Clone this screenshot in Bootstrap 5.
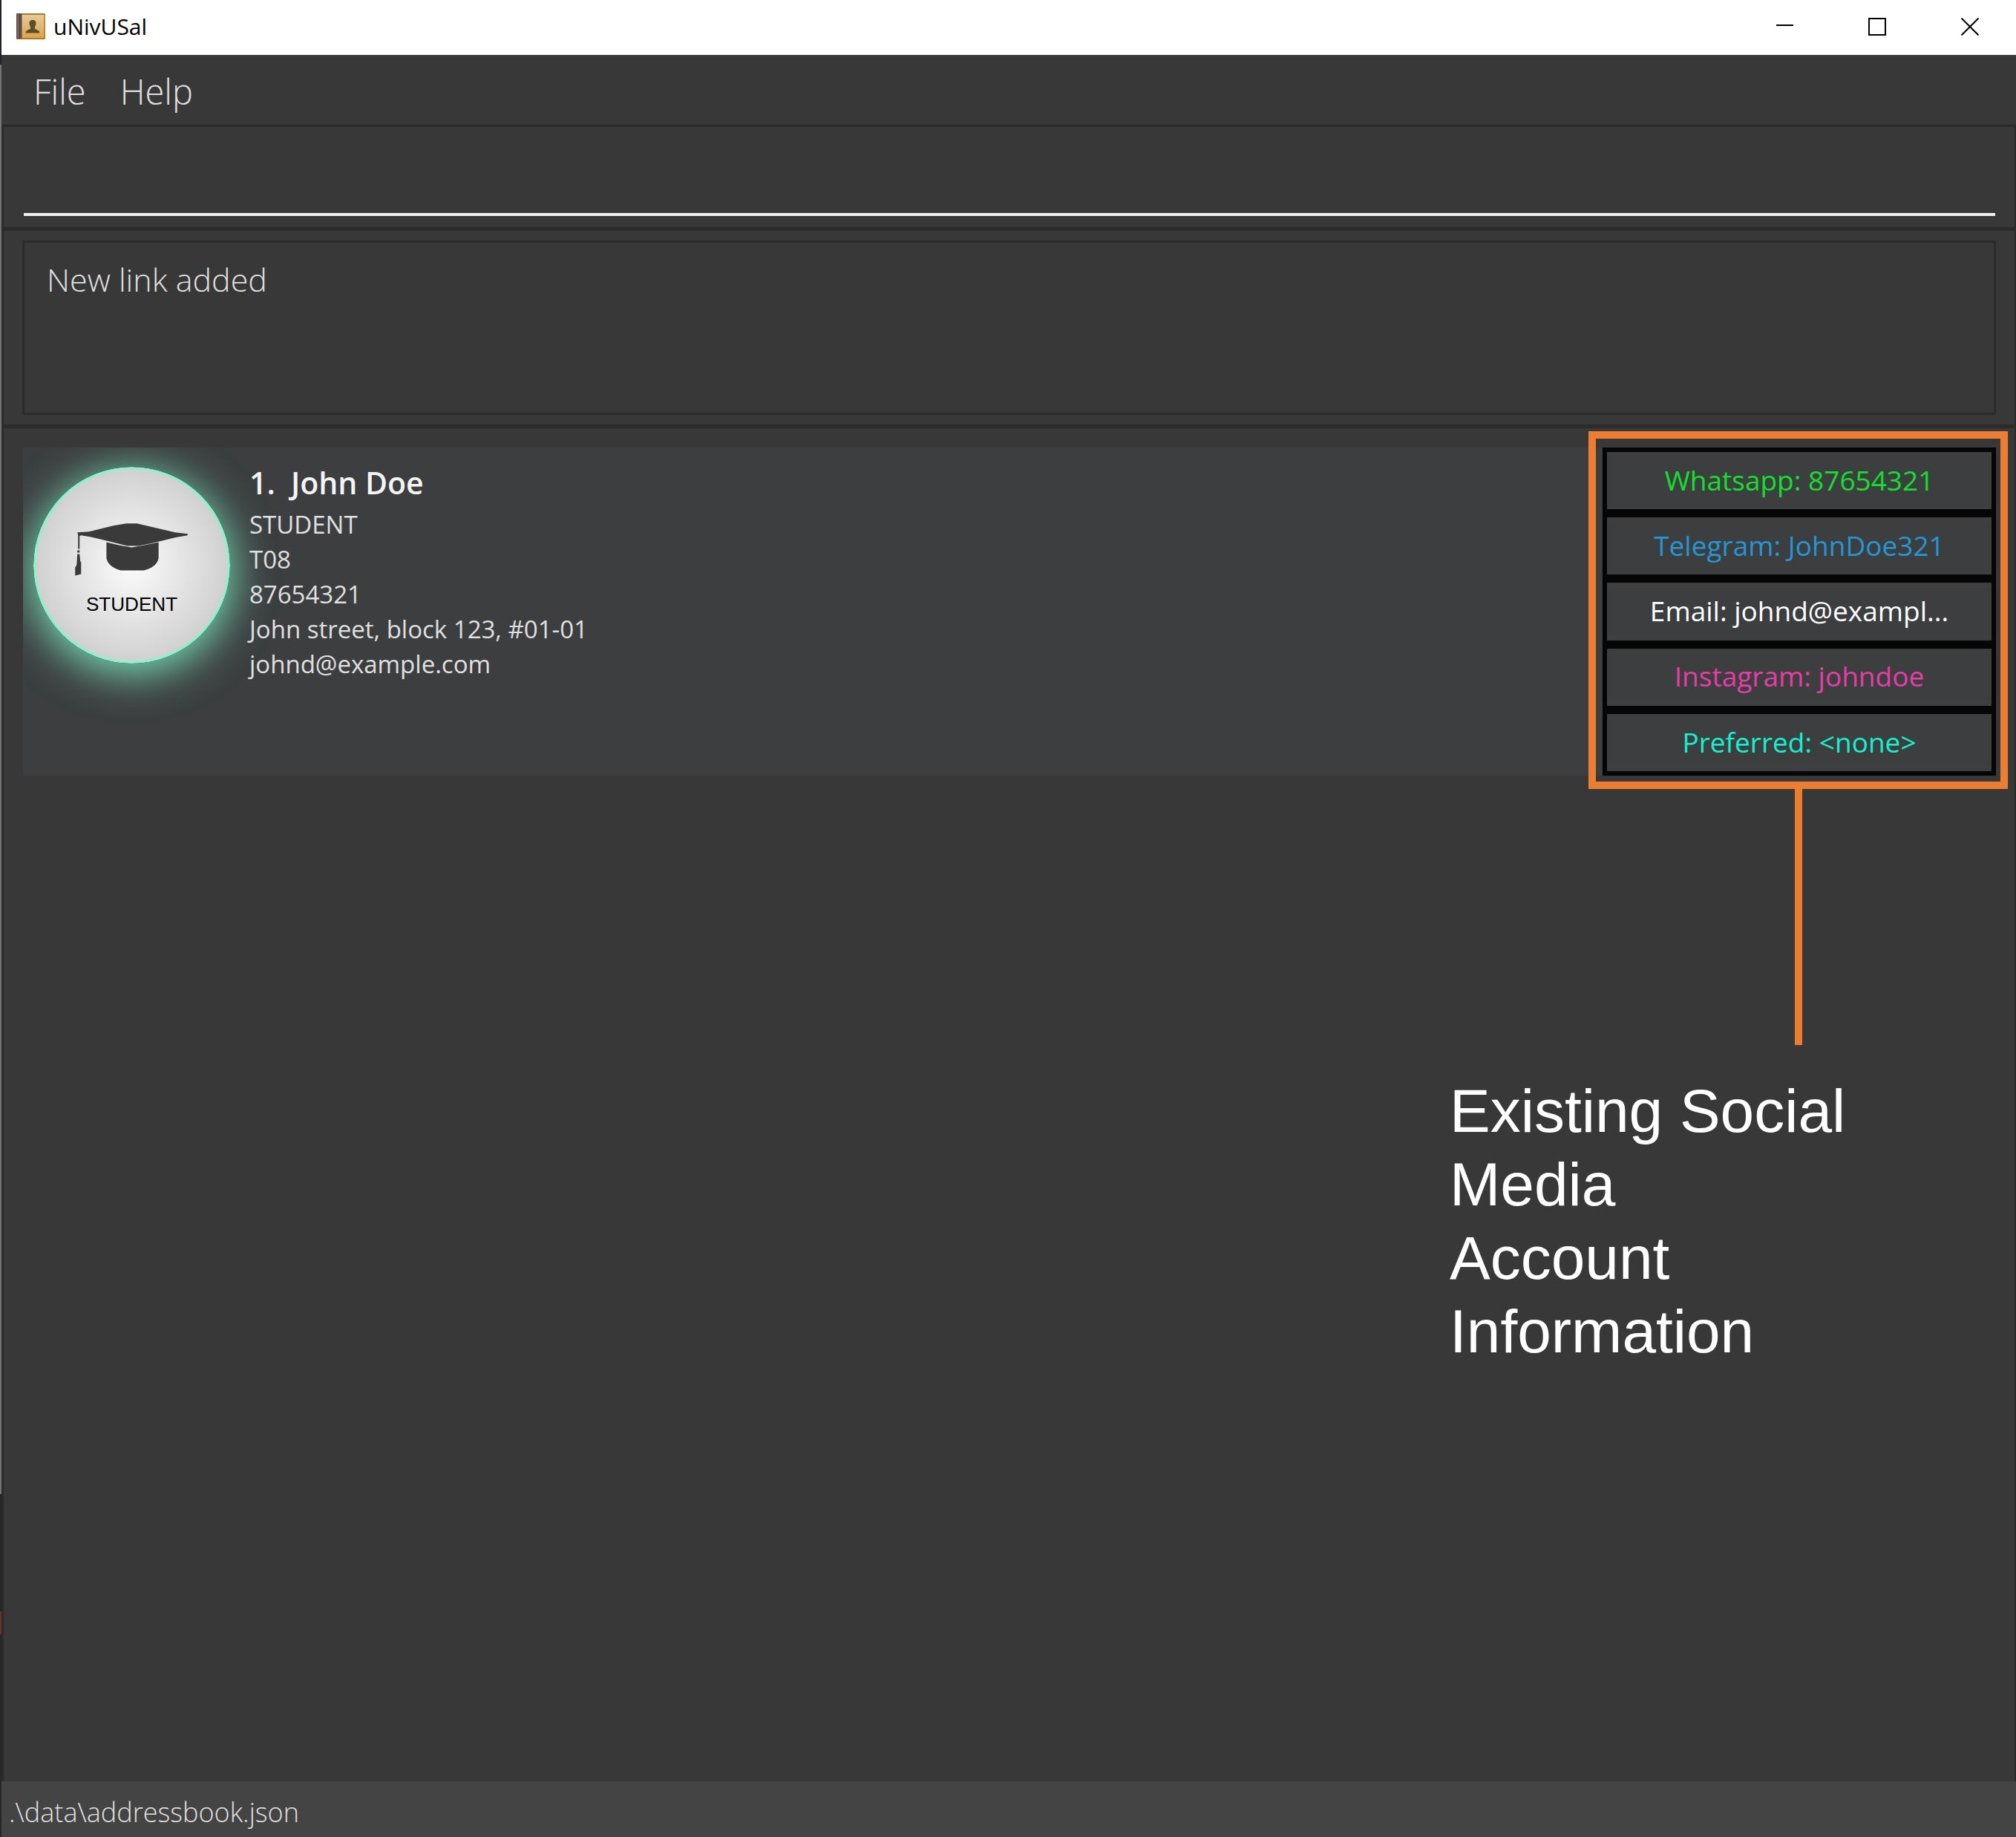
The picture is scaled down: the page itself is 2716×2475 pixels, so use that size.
<!DOCTYPE html>
<html lang="en">
<head>
<meta charset="utf-8">
<meta name="viewport" content="width=device-width, initial-scale=1">
<title>uNivUSal</title>
<link href="https://cdn.jsdelivr.net/npm/bootstrap@5.3.0/dist/css/bootstrap.min.css" rel="stylesheet">
<style>
  body { background: #383838; font-family: "Open Sans", "Noto Sans", sans-serif; color: #e0e0e0; }
  /* a sliver of the desktop shows at the left edge of the window */
  .app-window { padding-left: 2px; background: linear-gradient(#222226 87px, #747474 87px 2013px, #262626 2013px 2171px, #6e3028 2171px 2202px, #262626 2202px) left / 2px 100% no-repeat; }
  .title-bar { height: 74px; padding-left: 20px; background: #fff; color: #000; font-size: 30px; line-height: 40px; }
  .title-text { margin-bottom: 3px; }
  .app-icon { width: 40px; height: 38px; margin-right: 10px; }
  .win-btn { width: 125px; height: 72px; border: 0; background: none; padding: 0; display: flex; align-items: center; justify-content: center; }
  .menu-strip { height: 94px; padding: 4px 0 0 20px; }
  .menu-btn { border: 0; background: none; color: #e0e0e0; font-weight: 300; font-size: 47px; line-height: 64px; padding: 0 23px; }
  .pane { border: solid #2b2b2b; border-width: 3px 2px 0 3px; }
  .command-pane { height: 138px; padding: 0 26px 15px 27px; }
  .command-box { width: 100%; height: 100%; border: 0; border-bottom: 4px solid #f0f0f0; background: transparent; color: #fff; font-size: 43px; font-weight: 300; outline: 0; padding: 0; }
  .result-pane { border-top-width: 5px; padding: 13px 25px; }
  .result-box { display: block; width: 100%; height: 235px; resize: none; border: 3px solid #2b2b2b; background: transparent; color: #e0e0e0; font-size: 43px; line-height: 60px; font-weight: 300; padding: 20px 30px; outline: 0; }
  .list-pane { border-top-width: 5px; padding: 26px 25px 0 26px; }
  .person-card { background: #3c3e3f; height: 442px; }
  .person-main { overflow: hidden; padding: 26px 0 0 14px; }
  .avatar { width: 265px; height: 265px; border-radius: 50%; flex: none; box-shadow: 0 10px 56px 4px #78dcb8; }
  .person-text { padding: 3px 0 0 26px; font-size: 33px; line-height: 47px; }
  .person-name { font-size: 41px; line-height: 56px; font-weight: 600; color: #f4f4f4; margin: -10px 0 5px; white-space: pre; }
  .social { width: 530px; height: 442px; flex: none; }
  .social-list { border: 1px solid #000; background: #060606; padding: 5px; gap: 11px; }
  .social-list li { background: #3c3e3f; flex: 1 1 0; font-size: 37px; padding-bottom: 2px; }
  .c-whatsapp { color: #12e02c; } .c-telegram { color: #2496d4; } .c-email { color: #fff; } .c-instagram { color: #e83ca8; } .c-preferred { color: #14f0d0; }
  .marker-box { position: absolute; inset: -22px -16px -18px -19px; border: 10px solid #ed7d31; pointer-events: none; }
  .marker-line { position: absolute; left: 259px; top: 460px; width: 10px; height: 345px; background: #ed7d31; }
  .marker-text { position: absolute; left: -206px; top: 844px; font-family: "Liberation Sans", Arial, sans-serif; font-size: 82px; line-height: 99px; color: #fff; white-space: nowrap; margin: 0; }
  .status-bar { height: 75px; background: #444; font-size: 36px; font-weight: 300; line-height: 75px; padding: 4px 10px 0; }
</style>
<script src="https://cdn.jsdelivr.net/npm/bootstrap@5.3.0/dist/js/bootstrap.bundle.min.js"></script>
</head>
<body>
<div class="app-window min-vh-100 d-flex flex-column">
  <header class="title-bar d-flex align-items-center">
    <svg class="app-icon" viewBox="0 0 40 38" aria-hidden="true">
      <defs><linearGradient id="book" x1="0" y1="0" x2="0" y2="1"><stop offset="0" stop-color="#e6cb9a"/><stop offset="1" stop-color="#dca546"/></linearGradient></defs>
      <rect x="0" y="0" width="39" height="35" rx="1.500" fill="#a87a2c"/>
      <rect x="7" y="2" width="30.500" height="31" fill="url(#book)"/>
      <rect x="0" y="0" width="7.500" height="34" rx="1" fill="#5e4a44"/>
      <rect x="1.500" y="1" width="1.500" height="32" fill="#85716b"/>
      <path d="M22 9c3.200 0 4.800 2 4.500 5-.2 2-1 3.200-1.500 4v2.500c1 1.500 6.500 2 6.500 6H12.500c0-4 5.500-4.500 6.500-6V18c-.5-.8-1.300-2-1.500-4-.3-3 1.300-5 4.500-5z" fill="#5f4c2c"/>
    </svg>
    <span class="title-text">uNivUSal</span>
    <div class="d-flex ms-auto align-self-start">
      <button class="win-btn" aria-label="Minimize"><svg width="24" height="24" viewBox="0 0 24 24"><path d="M1 10h23" stroke="#000" stroke-width="2"/></svg></button>
      <button class="win-btn" aria-label="Maximize"><svg width="24" height="24" viewBox="0 0 24 24"><path d="M1 1h22v22H1z" fill="none" stroke="#000" stroke-width="2"/></svg></button>
      <button class="win-btn" aria-label="Close"><svg width="24" height="24" viewBox="0 0 24 24"><path d="M0.500 0.500l23 23M23.500 0.500l-23 23" stroke="#000" stroke-width="2"/></svg></button>
    </div>
  </header>
  <nav class="menu-strip d-flex align-items-center">
    <button class="menu-btn">File</button>
    <button class="menu-btn">Help</button>
  </nav>
  <section class="pane command-pane"><input class="command-box" type="text" aria-label="Command"></section>
  <section class="pane result-pane"><textarea class="result-box" readonly aria-label="Result">New link added</textarea></section>
  <main class="pane list-pane flex-grow-1">
    <article class="person-card d-flex">
      <div class="person-main d-flex flex-grow-1 align-items-start">
        <svg class="avatar" viewBox="0 0 264 264" role="img" aria-label="Student">
          <defs><radialGradient id="disc"><stop offset="0" stop-color="#fbfbfb"/><stop offset="1" stop-color="#d0d0d0"/></radialGradient></defs>
          <circle cx="132" cy="132" r="130.500" fill="url(#disc)" stroke="#80f8cc" stroke-width="3"/>
          <g fill="#3a3a3a">
            <path d="M59 88l16-1 16-4 16-4 18-3h14l17 4 17 4 17 4 17 2v2l-17 3-17 4-17 4-15 3h-15l-16-4-17-4-17-4-12-2-2 1v17h-2V92z"/>
            <path d="M98 101l17 4 17 3 17-3 19-4v22c-2 9-11 14-20 16h-31c-10-3-17-8-19-16z"/>
            <path d="M59 112h3v3h-3zM59 117h3l1 10 1 1v16l-8 2v-11l2-3z"/>
          </g>
          <text x="132" y="193" text-anchor="middle" font-family="Liberation Sans, Arial, sans-serif" font-size="26" fill="#000">STUDENT</text>
        </svg>
        <div class="person-text">
          <h1 class="person-name">1.  John Doe</h1>
          <div>STUDENT</div>
          <div>T08</div>
          <div>87654321</div>
          <div>John street, block 123, #01-01</div>
          <div>johnd@example.com</div>
        </div>
      </div>
      <aside class="social position-relative">
        <ul class="social-list list-unstyled d-flex flex-column h-100 m-0 text-center">
          <li class="c-whatsapp d-flex align-items-center justify-content-center">Whatsapp: 87654321</li>
          <li class="c-telegram d-flex align-items-center justify-content-center">Telegram: JohnDoe321</li>
          <li class="c-email d-flex align-items-center justify-content-center">Email: johnd@exampl...</li>
          <li class="c-instagram d-flex align-items-center justify-content-center">Instagram: johndoe</li>
          <li class="c-preferred d-flex align-items-center justify-content-center">Preferred: &lt;none&gt;</li>
        </ul>
        <div class="marker-box"></div>
        <div class="marker-line"></div>
        <p class="marker-text">Existing Social<br>Media<br>Account<br>Information</p>
      </aside>
    </article>
  </main>
  <footer class="status-bar">.\data\addressbook.json</footer>
</div>
</body>
</html>
